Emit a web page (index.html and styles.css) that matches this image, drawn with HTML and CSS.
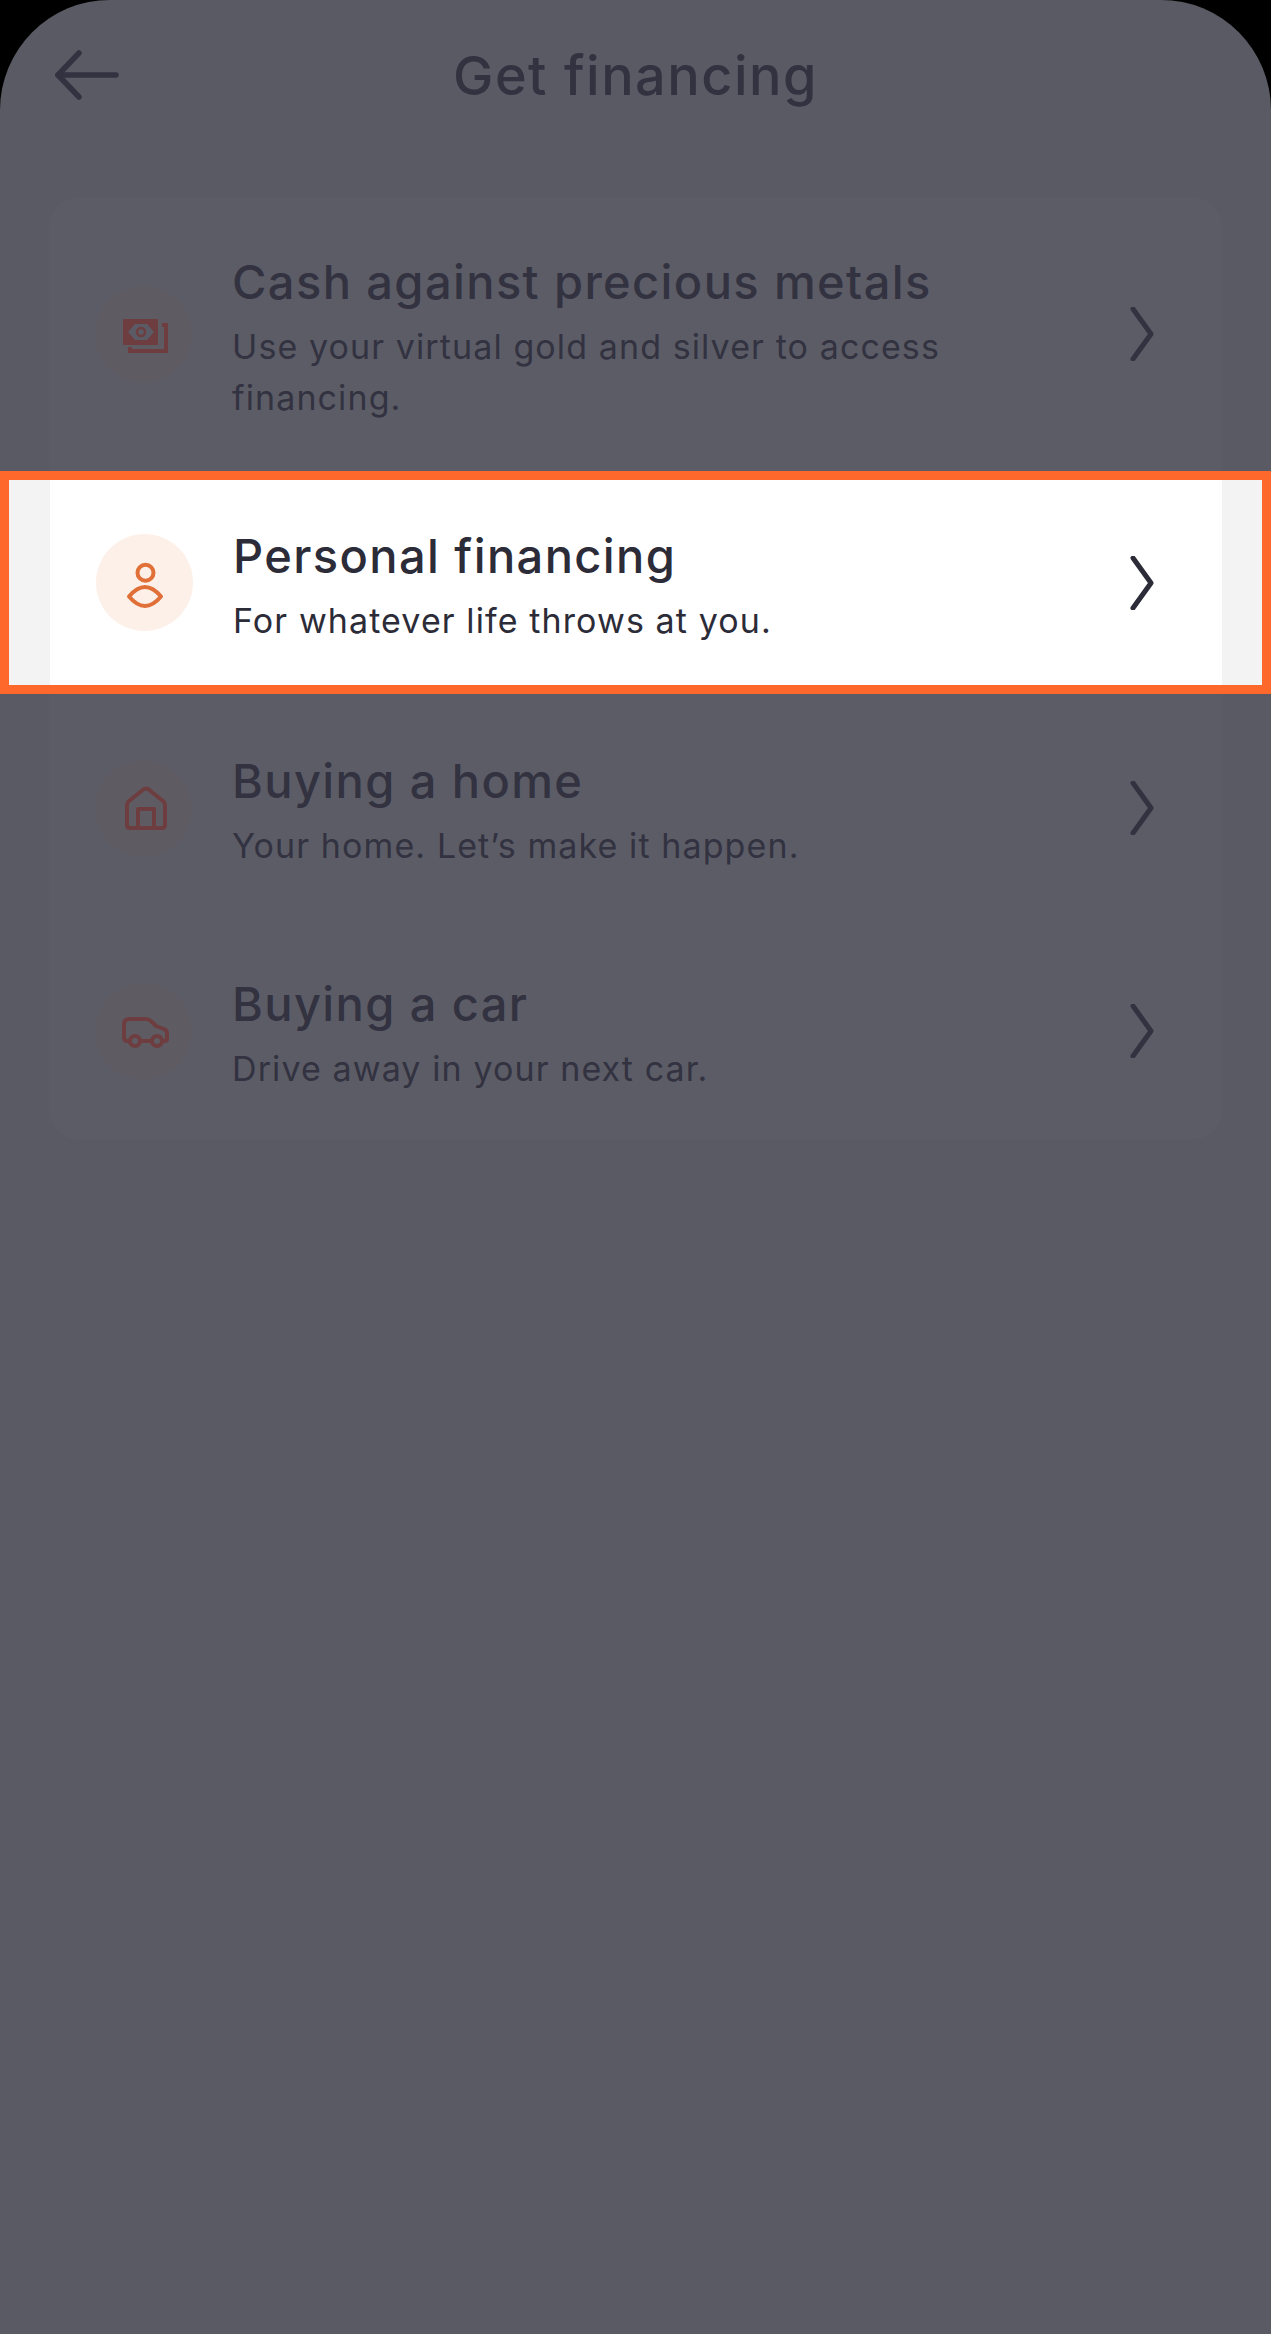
FILE: index.html
```html
<!DOCTYPE html>
<html lang="en">
<head>
    <meta charset="UTF-8">
    <meta name="viewport" content="width=device-width, initial-scale=1.0">
    <title>Get financing</title>
    <link rel="stylesheet" href="styles.css">
</head>
<body>
    <div class="screen">
        <header class="topbar">
            <svg class="back" width="64" height="50" viewBox="0 0 64 50" fill="none" stroke="currentColor" stroke-width="5.5" stroke-linecap="round" stroke-linejoin="round">
                <path d="M24 3 L3 25 L24 47"/>
                <path d="M3 25 H61"/>
            </svg>
            <h1>Get financing</h1>
        </header>
        <div class="card">
            <div class="row row-tall">
                <div class="badge">
                    <svg width="64" height="64" viewBox="0 0 64 64" fill="none">
                        <path d="M50 23 H54 V49 H18 V45" stroke="currentColor" stroke-width="4"/>
                        <rect x="11" y="17" width="35" height="26" fill="currentColor"/>
                        <path d="M16 30 L23 22 H35 L42 30 L35 38 H23 Z" fill="#5b5b66"/>
                        <circle cx="29" cy="30" r="4" stroke="currentColor" stroke-width="2.5"/>
                    </svg>
                </div>
                <div class="text">
                    <h2>Cash against precious metals</h2>
                    <p>Use your virtual gold and silver to access financing.</p>
                </div>
                <svg class="chevron" width="24" height="54" viewBox="0 0 24 54" fill="none" stroke="currentColor" stroke-width="5" stroke-linecap="round" stroke-linejoin="round"><path d="M3 2 L21 27 L3 52"/></svg>
            </div>
            <div class="row row-active">
                <div class="row-inner">
                    <div class="badge">
                        <svg width="64" height="64" viewBox="0 0 64 64" fill="none" stroke="currentColor" stroke-width="4">
                            <circle cx="32.5" cy="21.7" r="8"/>
                            <path d="M16 45.5 Q32 26.5 48 45.5 Q32 64.5 16 45.5 Z" stroke-linejoin="round"/>
                        </svg>
                    </div>
                    <div class="text">
                        <h2>Personal financing</h2>
                        <p>For whatever life throws at you.</p>
                    </div>
                    <svg class="chevron" width="24" height="54" viewBox="0 0 24 54" fill="none" stroke="currentColor" stroke-width="5" stroke-linecap="round" stroke-linejoin="round"><path d="M3 2 L21 27 L3 52"/></svg>
                </div>
            </div>
            <div class="row row-home">
                <div class="badge">
                    <svg width="64" height="64" viewBox="0 0 64 64" fill="none" stroke="currentColor" stroke-width="4" stroke-linejoin="round">
                        <path d="M15 29 Q15 27 17 25 L32 13 Q34 12 36 13 L51 25 Q53 27 53 29 V49 Q53 52 50 52 H18 Q15 52 15 49 Z"/>
                        <path d="M26 52 V33 H42 V52"/>
                    </svg>
                </div>
                <div class="text">
                    <h2>Buying a home</h2>
                    <p>Your home. Let’s make it happen.</p>
                </div>
                <svg class="chevron" width="24" height="54" viewBox="0 0 24 54" fill="none" stroke="currentColor" stroke-width="5" stroke-linecap="round" stroke-linejoin="round"><path d="M3 2 L21 27 L3 52"/></svg>
            </div>
            <div class="row">
                <div class="badge">
                    <svg width="64" height="64" viewBox="0 0 64 64" fill="none" stroke="currentColor" stroke-width="4" stroke-linejoin="round">
                        <path d="M18 42 H15 Q12 42 12 38 V25 Q12 20 18 20 H34 Q37 20 40 23 L44 27 L52 30 Q55 31 55 35 V40 Q55 42 52 42 H50"/>
                        <path d="M28 42 H40"/>
                        <circle cx="23" cy="42" r="5"/>
                        <circle cx="45" cy="42" r="5"/>
                    </svg>
                </div>
                <div class="text">
                    <h2>Buying a car</h2>
                    <p>Drive away in your next car.</p>
                </div>
                <svg class="chevron" width="24" height="54" viewBox="0 0 24 54" fill="none" stroke="currentColor" stroke-width="5" stroke-linecap="round" stroke-linejoin="round"><path d="M3 2 L21 27 L3 52"/></svg>
            </div>
        </div>
    </div>
</body>
</html>
```

FILE: styles.css
```css
html, body {
    margin: 0;
    padding: 0;
    background-color: black;
}
body {
    font-family: Inter, Lato, sans-serif;
}
.screen {
    height: 2334px;
    background-color: #5a5a65;
    border-radius: 110px 110px 0 0;
    color: #323240;
    overflow: hidden;
}
.topbar {
    height: 197px;
    display: flex;
    justify-content: center;
    position: relative;
}
.back {
    position: absolute;
    left: 55px;
    top: 50px;
}
h1 {
    margin: 46px 0 0;
    font-size: 54px;
    line-height: 60px;
    font-weight: 500;
    letter-spacing: 1.5px;
}
.card {
    margin: 0 49px;
    height: 943px;
    background-color: #5c5c67;
    border-radius: 30px;
}
.row {
    display: flex;
    align-items: center;
    height: 218px;
    padding: 0 68px 0 46px;
}
.row-tall {
    height: 274px;
}
.row-home {
    height: 228px;
}
.row-active {
    height: 223px;
    margin: 0 -49px;
    padding: 0;
    box-sizing: border-box;
    border: 9px solid #ff682b;
    background-color: #f3f3f4;
    position: relative;
}
.row-inner {
    display: flex;
    align-items: center;
    flex: 1;
    align-self: stretch;
    margin: 0 40px 0 41px;
    padding: 0 68px 0 46px;
    background-color: white;
    color: #2c2c38;
}
.badge {
    flex: none;
    width: 97px;
    height: 97px;
    border-radius: 50%;
    background-color: #5f5b63;
    color: #6e3d40;
    display: flex;
    align-items: center;
    justify-content: center;
}
.row-active .badge {
    background-color: #fdf0e9;
    color: #e06f38;
}
.text {
    flex: 1;
    margin-left: 40px;
    padding-top: 8px;
}
h2 {
    margin: 0 0 11px;
    font-size: 47px;
    line-height: 56px;
    font-weight: 500;
    letter-spacing: 1.4px;
}
p {
    margin: 0;
    font-size: 34px;
    line-height: 51px;
    letter-spacing: 1.1px;
    max-width: 780px;
}
.chevron {
    flex: none;
}
```
